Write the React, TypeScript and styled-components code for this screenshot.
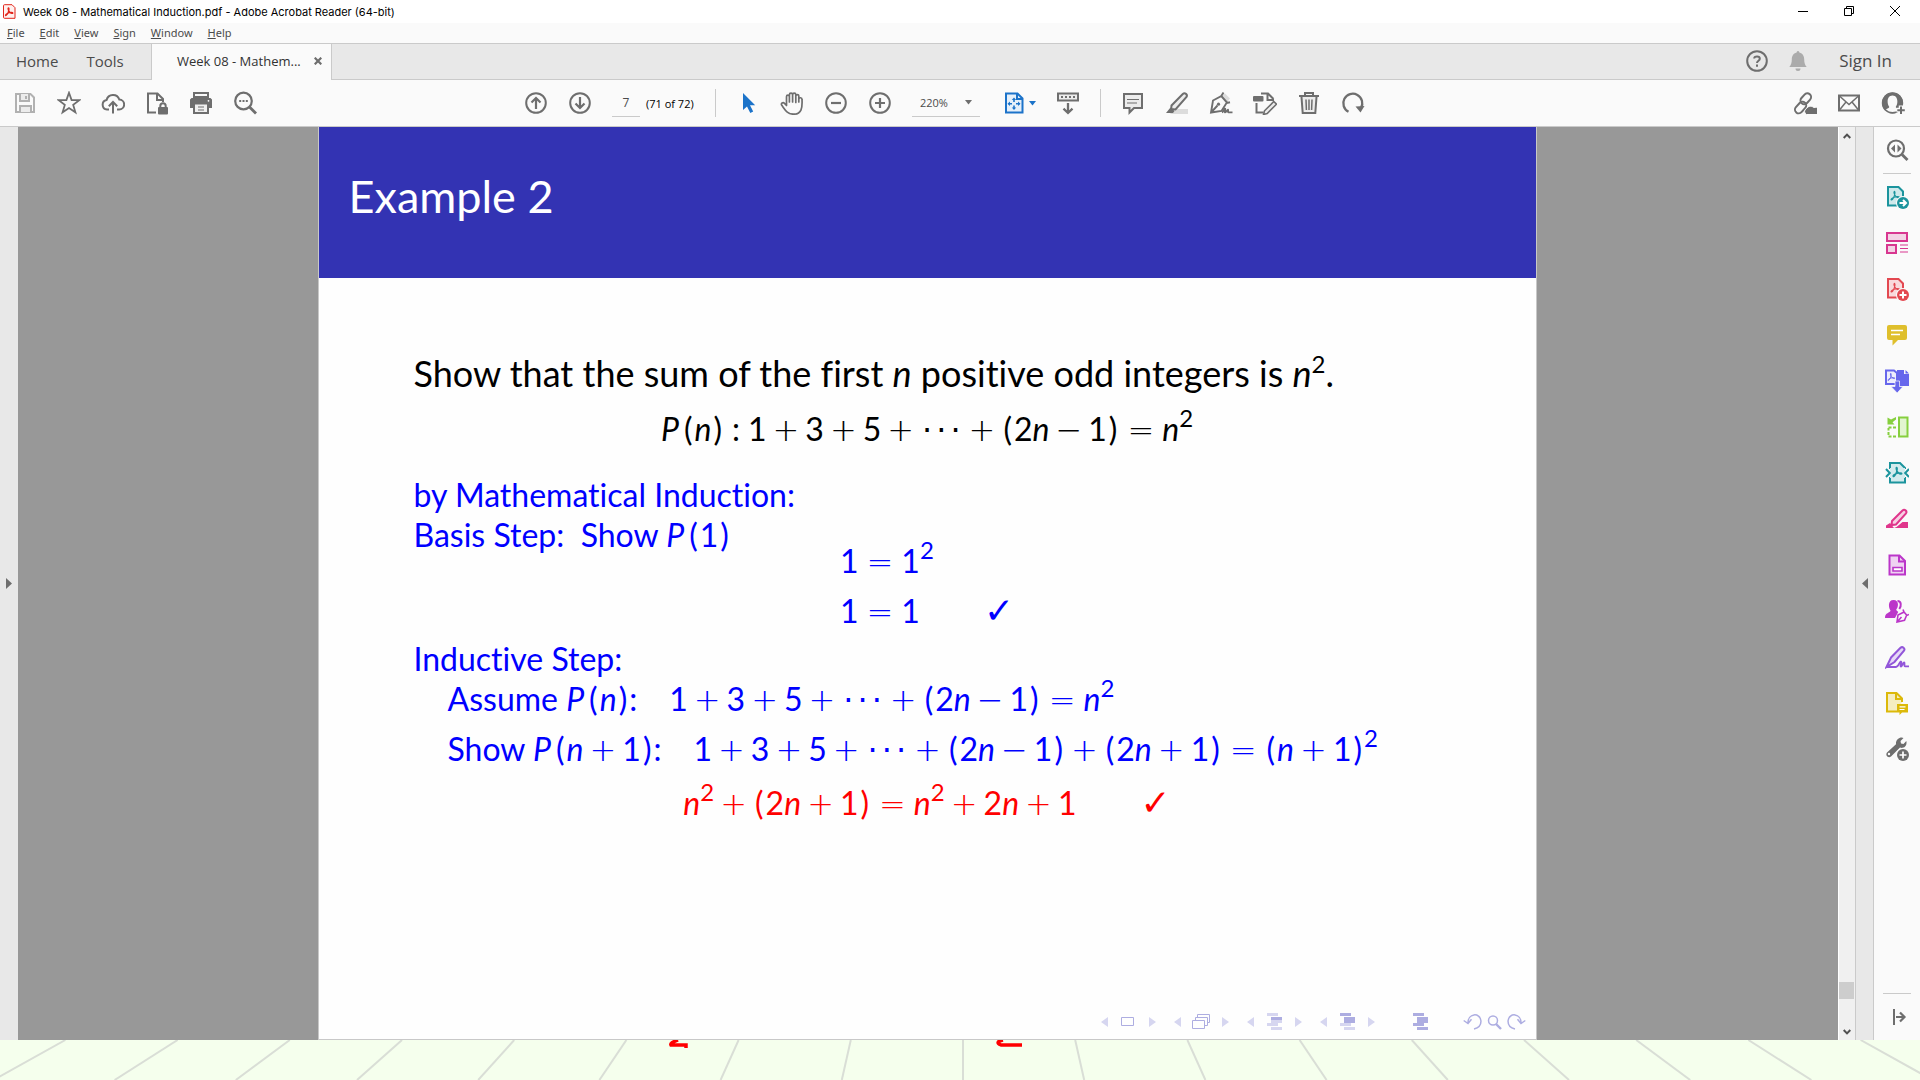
import React from "react";
import styled, { createGlobalStyle } from "styled-components";

const ui = '"Open Sans", "Noto Sans", sans-serif';
const grey = "#6e6e6e";

const GlobalStyle = createGlobalStyle`
  *, *::before, *::after { box-sizing: border-box; }
  body { margin: 0; font-family: ${ui}; }
  button, input, select { font: inherit; color: inherit; margin: 0; }
`;

const Window = styled.div`
  display: flex;
  flex-direction: column;
  height: 100vh;
  min-width: 1420px;
  overflow: hidden;
  background: #fafafa;
`;

/* ---------- window chrome ---------- */

const TitleBar = styled.header`
  display: flex;
  align-items: center;
  height: 23px;
  padding: 0 2px 0 3px;
  background: #fff;
  color: #000;
`;
const WindowTitle = styled.h1`
  flex: 1;
  margin: 0 0 0 7px;
  font-family: Inter, sans-serif;
  font-size: 11px;
  font-weight: 400;
  line-height: 22px;
`;
const WindowButton = styled.button`
  display: grid;
  place-items: center;
  width: 46px;
  height: 22px;
  padding: 0 0 2px;
  border: 0;
  background: none;
`;
const MenuBar = styled.nav`
  display: flex;
  gap: 15px;
  height: 21px;
  padding: 0 7px;
  border-bottom: 1px solid #cacaca;
  background: #fafafa;
`;
const MenuItem = styled.button`
  padding: 0;
  border: 0;
  background: none;
  color: #4b4b4b;
  font-family: "Noto Sans", sans-serif;
  font-size: 11px;
  line-height: 20px;
  &::first-letter { text-decoration: underline; }
`;

const TabBar = styled.nav`
  display: flex;
  height: 36px;
  background: #e8e8e8;
  box-shadow: inset 0 -1px #cacaca;
`;
const TabLinks = styled.div`
  display: flex;
  gap: 28px;
  width: 151px;
  padding-left: 16px;
`;
const TabLink = styled.button`
  padding: 0 0 2px;
  border: 0;
  background: none;
  color: #4b4b4b;
  font-size: 15px;
  white-space: nowrap;
`;
const DocTab = styled.div`
  display: flex;
  align-items: center;
  justify-content: space-between;
  width: 181px;
  padding: 0 9px 2px 25px;
  border: solid #cacaca;
  border-width: 0 1px;
  background: #fafafa;
  color: #323232;
  font-size: 13px;
  white-space: nowrap;
`;
const Account = styled.div`
  display: flex;
  align-items: center;
  gap: 17px;
  margin-left: auto;
  padding: 0 28px 2px 0;
  color: ${grey};
`;
const SignInLink = styled.a`
  margin-left: 12px;
  color: #4b4b4b;
  font-size: 17px;
  line-height: 24px;
  text-decoration: none;
`;
const PlainButton = styled.button`
  display: grid;
  padding: 0;
  border: 0;
  background: none;
`;

/* ---------- toolbar ---------- */

const Toolbar = styled.div`
  display: grid;
  grid-template-columns: 1fr auto 1fr;
  align-items: center;
  height: 47px;
  padding: 0 5px 0 3px;
  border-bottom: 1px solid #cacaca;
  background: #fafafa;
  color: ${grey};
`;
const Group = styled.div<{ $end?: boolean }>`
  display: flex;
  align-items: center;
  justify-content: ${(p) => (p.$end ? "flex-end" : "flex-start")};
`;
const CenterGroup = styled(Group)`
  padding-right: 29px;
`;
const ToolButton = styled.button<{ $wide?: boolean }>`
  display: flex;
  align-items: center;
  justify-content: center;
  gap: 3px;
  width: ${(p) => (p.$wide ? 54 : 44)}px;
  height: 44px;
  padding: 0;
  border: 0;
  background: none;
`;
const Separator = styled.span`
  width: 1px;
  height: 28px;
  margin: 0 10px;
  background: #cacaca;
`;
const PageInput = styled.input`
  width: 28px;
  height: 28px;
  margin-left: 10px;
  padding: 0;
  border: 0;
  border-bottom: 1px solid #cacaca;
  background: none;
  color: #4b4b4b;
  font-size: 12px;
  text-align: center;
`;
const PageCount = styled.span`
  width: 65px;
  padding-left: 6px;
  color: #000;
  font-size: 11px;
  white-space: nowrap;
`;
const ZoomField = styled.div`
  display: flex;
  align-items: center;
  width: 68px;
  height: 28px;
  margin: 0 12px 0 10px;
  padding-right: 7px;
  border-bottom: 1px solid #cacaca;
`;
const ZoomSelect = styled.select`
  flex: 1;
  width: 0;
  padding: 0 0 0 8px;
  border: 0;
  background: none;
  color: #4b4b4b;
  font-size: 11px;
  appearance: none;
`;

/* ---------- viewer ---------- */

const Viewer = styled.main`
  display: flex;
  flex: 1;
  min-height: 0;
`;
const SideHandle = styled.button<{ $right?: boolean }>`
  display: grid;
  place-items: center;
  width: ${(p) => (p.$right ? 19 : 18)}px;
  padding: 0;
  border: solid #cacaca;
  border-width: ${(p) => (p.$right ? "0 1px" : "0")};
  background: #e8e8e8;
`;
const Canvas = styled.div`
  display: flex;
  justify-content: center;
  flex: 1;
  padding-right: 2px;
  background: #989898;
`;
const Scrollbar = styled.div`
  display: flex;
  flex-direction: column;
  width: 17px;
  border-left: 1px solid #fff;
  background: #f0f0f0;
`;
const ScrollArrow = styled.button`
  display: grid;
  place-items: center;
  height: 17px;
  padding: 0;
  border: 0;
  background: none;
`;
const ScrollTrack = styled.div`
  display: flex;
  flex-direction: column;
  justify-content: flex-end;
  flex: 1;
  padding-bottom: 24px;
`;
const ScrollThumb = styled.div`
  height: 17px;
  margin-right: 1px;
  background: #cdcdcd;
`;
const ToolPane = styled.aside`
  display: flex;
  flex-direction: column;
  align-items: center;
  width: 46px;
  background: #fafafa;
  color: ${grey};
`;
const PaneButton = styled.button`
  display: grid;
  place-items: center;
  width: 46px;
  height: 46px;
  padding: 0;
  border: 0;
  background: none;
`;
const PaneRule = styled.span<{ $push?: boolean }>`
  width: 28px;
  height: 1px;
  margin-top: ${(p) => (p.$push ? "auto" : "0")};
  background: #cacaca;
`;

/* ---------- slide ---------- */

const Slide = styled.article`
  display: flex;
  flex-direction: column;
  width: min(100%, 1219px);
  border: solid #c8c8c8;
  border-width: 0 1px 1px;
  background: #fefefe;
  font-family: Lato, "Open Sans", sans-serif;
  font-size: 32px;
  font-variant-ligatures: none;
  line-height: 26px;
  white-space: nowrap;
`;
const SlideHeader = styled.header`
  height: 151px;
  padding: 42px 30px;
  background: #3333b3;
`;
const SlideTitle = styled.h2`
  margin: 0;
  color: #fff;
  font-size: 45px;
  font-weight: 400;
  line-height: 54px;
`;
const SlideBody = styled.div`
  display: flex;
  flex-direction: column;
  flex: 1;
  padding: 82px 95px 0;
  color: #0000ff;
`;
const Line = styled.p<{ $top?: number; $indent?: boolean }>`
  display: flex;
  align-items: baseline;
  margin: ${(p) => p.$top || 0}px 0 0;
  padding-left: ${(p) => (p.$indent ? 34 : 0)}px;
  white-space: pre;
`;
const Lead = styled(Line)`
  color: #000;
  font-size: 36px;
`;
const Centered = styled(Line)<{ $color?: string }>`
  justify-content: center;
  color: ${(p) => p.$color || "#0000ff"};
`;
const Derivation = styled.div`
  align-self: center;
`;
const Sup = styled.sup`
  font-size: 24px;
  line-height: 0;
  vertical-align: 14px;
`;
const Sign = styled.span<{ $gap?: number }>`
  margin: 0 ${(p) => p.$gap ?? 6}px;
  font-family: "DejaVu Sans", sans-serif;
  font-weight: 200;
  line-height: 0;
`;
const Dot = styled.span`
  margin: 0 2px;
  font-family: "DejaVu Sans", sans-serif;
  line-height: 0;
`;
const Delimiter = styled.span<{ $wide?: boolean }>`
  margin: 0 ${(p) => (p.$wide ? 8 : 2)}px;
`;
const Predicate = styled.i`
  margin-right: 3px;
`;
const Formula = styled.span<{ $gap?: boolean }>`
  margin-left: ${(p) => (p.$gap ? 32 : 0)}px;
`;
const Check = styled.span`
  margin-left: 64px;
  font-family: "DejaVu Sans", sans-serif;
  font-size: 36px;
  line-height: 0;
`;
const SlideNav = styled.nav`
  display: flex;
  align-items: center;
  justify-content: flex-end;
  gap: 18px;
  height: 34px;
  padding-right: 13px;
`;
const NavGroup = styled.div<{ $wide?: boolean }>`
  display: flex;
  align-items: center;
  justify-content: ${(p) => (p.$wide ? "center" : "space-between")};
  width: ${(p) => (p.$wide ? 56 : 55)}px;
`;
const NavButton = styled.button`
  display: grid;
  padding: 0;
  border: 0;
  background: none;
`;

/* ---------- desktop behind the window ---------- */

const Desktop = styled.footer`
  height: 40px;
  overflow: hidden;
  background: #f5ffed;
`;

/* ---------- icons ---------- */

type IconProps = { children: React.ReactNode; size?: number; color?: string };
const Icon = ({ children, size = 24, color = "currentColor" }: IconProps) => (
  <svg width={size} height={size} viewBox="0 0 24 24" fill="none" stroke={color} strokeWidth="2" aria-hidden="true">
    {children}
  </svg>
);

const Caret = ({ color = grey }: { color?: string }) => (
  <svg width="8" height="5" viewBox="0 0 8 5" aria-hidden="true"><path d="M0 0h7L3.500 4.500z" fill={color} /></svg>
);

const Trefoil = ({ x = 0, y = 0, s = 1, w = 1.3 }) => (
  <path
    transform={`translate(${x} ${y}) scale(${s})`}
    strokeWidth={w}
    strokeLinejoin="round"
    d="M4.200 0.500C3.200 1 4.300 4.500 6.200 6.200 8 7.800 9.800 7.700 9.800 6.900 9.800 6 6.500 5.900 4 6.900 1.500 7.900 0.200 9.300 0.700 9.900 1.600 10.600 3.600 7.600 4.400 5 5.100 2.600 5.200 0.400 4.200 0.500z"
  />
);

const SaveIcon = () => (
  <Icon color="#b1b1b1">
    <path d="M3 3h14.500L21 6.500V21H3z" /><path d="M7 3v7h9V3M13 5v3M7 21v-6h11v6" fill="#ececec" />
  </Icon>
);
const StarIcon = () => (
  <Icon><path d="M12 1.800l2.600 7.200 7.700.2-6.100 4.700 2.200 7.400L12 17l-6.400 4.300 2.200-7.400L1.700 9.200l7.700-.2z" strokeWidth="1.800" /></Icon>
);
const CloudIcon = () => (
  <Icon><path d="M8 18.500H6A4.800 4.800 0 0 1 5.600 9 6.600 6.600 0 0 1 18.300 8.500 5 5 0 0 1 18 18.500h-2" /><path d="M12 22.500V11.500M7.800 15.200L12 11l4.200 4.200" /></Icon>
);
const FileLockIcon = () => (
  <Icon>
    <path d="M11 21.500H3v-19h9.500L18 8v3M12 2.500V9h6" />
    <rect x="13" y="16" width="10" height="7.500" rx="1" fill={grey} stroke="none" />
    <path d="M15.300 16.500v-1.500a2.700 2.700 0 0 1 5.400 0v1.500" />
  </Icon>
);
const PrintIcon = () => (
  <Icon>
    <path d="M5 6V2h14v4z" />
    <path d="M2.500 7h19l1.500 1.500V17h-4v-4H5v4H1V8.500z" fill={grey} stroke="none" />
    <path d="M5 13v9h14v-9" fill="#f0f0f0" /><path d="M5 13h14" strokeWidth="1" /><path d="M9 16h6M9 19h6" strokeWidth="1" />
    <circle cx="19.500" cy="9.800" r=".9" fill="#fff" stroke="none" />
  </Icon>
);
const SearchIcon = () => (
  <Icon>
    <circle cx="10.500" cy="10" r="8.300" strokeWidth="2.200" /><path d="M16.500 16l6.500 6.500" strokeWidth="2.800" />
    <path d="M6.200 10h2M9.500 10h2M12.800 10h2" />
  </Icon>
);
const CircleIcon = ({ d }: { d: string }) => (
  <Icon><circle cx="12" cy="12" r="9.800" /><path d={d} strokeWidth="2.200" /></Icon>
);
const CursorIcon = () => (
  <Icon color="#1c73c9"><path d="M7 2v17l4-3.600L14.300 22l2.900-1.400L14 14.200h5.200z" fill="#1c73c9" stroke="none" /></Icon>
);
const HandIcon = () => (
  <Icon>
    <path strokeWidth="1.700" strokeLinejoin="round" strokeLinecap="round" d="M6.500 14.500V5.700c0-2 2.900-2 2.900 0V11 3.700c0-2 3.200-2 3.200 0V11 3.700c0-2 3.200-2 3.200 0V11.500 5c0-1.900 3-1.900 3 0V11 8c.3-1.700 3.200-1.700 3.200.4C22.500 17 21.500 23.200 13.500 23.200 7.500 23.200 5.500 19.500 1.800 14.300.6 12.400 3 10.800 4.500 12.400z" />
  </Icon>
);
const FitIcon = () => (
  <Icon color="#1c73c9">
    <path d="M4 2.500h11.500l5 5V21.500H4z" fill="#e6f0fa" /><path d="M15 2.500V8h5.500" />
    <path d="M12 8v3M12 14.500v3M6.500 12.700h3.500M14 12.700h3.500" strokeWidth="1.600" />
    <path d="M9.800 9L12 6.500l2.200 2.500zM9.800 16.500L12 19l2.200-2.500zM8 10.500l-2.500 2.200L8 15zM16 10.500l2.500 2.200L16 15z" fill="#1c73c9" stroke="none" />
  </Icon>
);
const ScrollModeIcon = () => (
  <Icon><path d="M2 2.500h20v7H2z" fill="#ececec" /><path d="M5 6h14" strokeDasharray="2 2" /><path d="M12 12v10M7.500 17.700L12 22l4.500-4.300" strokeWidth="2.300" /></Icon>
);
const CommentIcon = () => (
  <Icon><path d="M3 3h18v14h-8l-4.500 4.500V17H3z" fill="#ececec" /><path d="M6 8.500h12M6 12h10" strokeWidth="1.200" /></Icon>
);
const HighlightIcon = () => (
  <Icon>
    <path d="M9 18h14v5H5z" fill="#dcdcdc" stroke="none" />
    <path d="M6.500 14.500L17.800 3c2-1.800 5.200.5 3.700 3L10.500 18.500l-4.300-.4z" fill="#ececec" />
    <path d="M5.500 16.500l4 3.500-1.500 2H1z" fill={grey} stroke="none" />
  </Icon>
);
const SignIcon = () => (
  <Icon>
    <path d="M13.500 4.500l5 6 2.500-3-5-5z" fill="#dcdcdc" stroke="none" />
    <path d="M14.500 1.500L12.300 5 4 9.500 2 21.500l10.500-1.600 5-7.900 3.500-.8M12.300 5l5.700 6.500M2.500 21l6-6.500" strokeWidth="1.900" />
    <circle cx="9.500" cy="13.200" r="1.600" fill={grey} stroke="none" />
    <path d="M13 21.500c1-.3 2.500-4.500 3.200-3.800.7.700-1.200 3.600 0 3.600s2-2.900 2.800-2.700c.7.200-.6 2.700.5 2.700h4" strokeWidth="1.800" />
  </Icon>
);
const EditPdfIcon = () => (
  <Icon>
    <path d="M8 2.500h7l5.500 5.500M14.500 2.500V9H21M3.500 12v9.500h7" />
    <rect x="0" y="5" width="10.500" height="5.500" rx="1" fill={grey} stroke="none" />
    <path d="M20.800 10.500l2.700 2.700-9.300 9.300-3.700 1 1-3.700z" fill="#ececec" strokeWidth="1.600" />
  </Icon>
);
const TrashIcon = () => (
  <Icon><path d="M4.500 6L5.700 22h12.600L19.500 6" fill="#ececec" /><path d="M2 5h20M8 5V2h8v3" /><path d="M9 8.500l.4 10.500M12 8.500V19M15 8.500L14.600 19" strokeWidth="1.500" /></Icon>
);
const RotateIcon = () => (
  <Icon><path d="M7.500 20.700A9.500 9.500 0 1 1 20 17" strokeWidth="2.300" /><path d="M14.500 15.500l9-.5-4 6.500z" fill={grey} stroke="none" /></Icon>
);
const LinkCloudIcon = () => (
  <Icon>
    <g transform="rotate(-48 10 12)"><rect x="9" y="7.500" width="12" height="7.500" rx="3.700" /><rect x="-1.500" y="9.500" width="13" height="7.500" rx="3.700" /></g>
    <path d="M13.500 23.500a3.300 3.300 0 0 1 0-6 4.600 4.600 0 0 1 7.300-1 3.700 3.700 0 0 1 3.200 7z" fill={grey} stroke="#fafafa" strokeWidth="1" />
  </Icon>
);
const MailIcon = () => (
  <Icon><path d="M2 4.500h20v15H2z" /><path d="M2.500 5l9.500 8.500L21.500 5M2.500 19L9 11M21.500 19L15 11" strokeWidth="1.500" /></Icon>
);
const UserIcon = () => (
  <Icon>
    <circle cx="11.500" cy="12" r="10.500" fill={grey} stroke="none" />
    <path d="M4 19.200c1.500-1.800 3.800-1.700 4.300-3.200C5.500 12 6 4.500 11.500 4.500s6 7.500 3.200 11.500c.5 1.500 2.800 1.400 4.300 3.200A10.400 10.400 0 0 1 4 19.200z" fill="#fafafa" stroke="none" />
    <circle cx="11.500" cy="12" r="9.900" strokeWidth="1.600" />
    <path d="M20 14.500v9M15.500 19h9" stroke="#fafafa" strokeWidth="4.500" /><path d="M20 15.500v7.500M16.300 19.200h7.500" />
  </Icon>
);
const HelpIcon = () => (
  <Icon><circle cx="12" cy="12" r="9.800" /><path d="M9.200 9.500C9.200 6.700 14.800 6.700 14.800 9.700c0 2-2.800 2-2.800 4.300M12 15.500v2.200" /></Icon>
);
const BellIcon = () => (
  <Icon><path d="M12 2c1 0 1.300.8 1.300 1.600 3.700.8 4.900 4 4.900 7 0 3.400.8 5.400 2.500 7.400H3.300c1.700-2 2.500-4 2.500-7.400 0-3 1.200-6.200 4.900-7C10.700 2.800 11 2 12 2zM9.500 19.500h5a2.500 2.500 0 0 1-5 0z" fill="#ababab" stroke="none" /></Icon>
);

/* tools pane */
const FindPaneIcon = () => (
  <Icon><circle cx="11" cy="10.500" r="8" strokeWidth="2.200" /><path d="M17 16.500l5.500 5.500" strokeWidth="2.800" /><path d="M10 6.500v8L6 10.500zM12.500 6.500v8l4-4z" fill={grey} stroke="none" /></Icon>
);
const PdfBadgeIcon = ({ color, tint, d }: { color: string; tint: string; d: string }) => (
  <Icon color={color}>
    <path d="M3 2h10.500L18 6.500V20.500H3z" fill={tint} /><Trefoil x={5.500} y={6} s={0.9} />
    <circle cx="18" cy="18" r="7" fill="#fafafa" stroke="none" /><circle cx="18" cy="18" r="6" fill={color} stroke="none" />
    <path d={d} stroke="#fff" />
  </Icon>
);
const OrganizeIcon = () => (
  <Icon color="#d83790"><path d="M2 2h20v8H2zM2 14h9v8H2z" fill="#f3d3e5" /><path d="M15 14h8M15 17.500h8M15 21h8" strokeWidth="1.200" /></Icon>
);
const CommentPaneIcon = () => (
  <Icon><path d="M4 2h16a2 2 0 0 1 2 2v11a2 2 0 0 1-2 2h-7l-5.500 5.500V17H4a2 2 0 0 1-2-2V4a2 2 0 0 1 2-2z" fill="#dfbf2c" stroke="none" /><path d="M6 7.500h12M6 11.500h9" stroke="#fff" strokeWidth="1.600" /></Icon>
);
const CombineIcon = () => (
  <Icon color="#6767ec">
    <path d="M1 1.500h8L12 4v11H1z" fill="#eeeefc" /><path d="M12 1h7v4h5v12H12z" fill="#6767ec" stroke="none" />
    <path d="M20.500 1v3.500H24z" fill="#6767ec" stroke="none" /><Trefoil x={2.500} y={4} s={0.75} />
    <path d="M10 12h4.500v5.500H18L12.200 24 6 17.500h4z" fill="#6767ec" stroke="#fafafa" strokeWidth=".7" />
  </Icon>
);
const RotatePageIcon = () => (
  <Icon color="#86cf3e"><path d="M14 2.500h8.500v19H14z" fill="#e2f5d0" /><path d="M11 21.500H3.500V13M11 12.500H3" strokeDasharray="3 1.500" /><path d="M2.500 2.500v7h7L7.500 7.200 11 4.500V2L6 4.500z" fill="#86cf3e" stroke="none" /></Icon>
);
const CompressIcon = () => (
  <Icon color="#1b949d">
    <path d="M5 8V2h10l5 5v1M5 16v5.500h15V16" fill="#d3ebed" /><path d="M5 7h15v10H5z" fill="#d3ebed" stroke="none" />
    <path d="M1 8l3.800 4L1 16M24 8l-3.800 4 3.800 4" /><Trefoil x={7.500} y={6} s={0.95} w={1.500} />
  </Icon>
);
const RedactIcon = () => (
  <Icon color="#e0368c"><path d="M7 14L17.500 3.500c2-1.800 5 .6 3.500 2.800L11 17.500 6.500 18z" fill="#f7d0e3" /><path d="M11.500 20l6-5H23v6H9zM1 21v-2.500L5 16l4 5z" fill="#e0368c" stroke="none" /></Icon>
);
const FormIcon = () => (
  <Icon color="#bb36c9"><path d="M4.500 2.500h10L20 8v13.500H4.500z" fill="#efd2f2" /><path d="M14 2.500V8.500h6" /><path d="M8 14.500h9v3.500H8z" fill="#fff" strokeWidth="1.600" /></Icon>
);
const CertifyIcon = () => (
  <Icon color="#bb36c9">
    <path d="M8.500 1c6 0 5 7.500 2.700 9.500.3 2 2 1.500 2 2.500L10 19H0c0-6 5-4.500 5.500-7.500C3.500 9 2.500 1 8.500 1z" fill="#bb36c9" stroke="none" />
    <path d="M12.500 2c4 0 4 5 1.800 8" /><path d="M18 10.500l1 2.500-6 3-1 7 7.500-1.800 2-4.700 2.500-1M19 13l3 3.500M12.500 22.500l4-4.500" strokeWidth="1.600" />
  </Icon>
);
const FillSignIcon = () => (
  <Icon color="#9256d9"><path d="M6 12.500L15.500 2.800c2-1.800 5 .6 3.500 2.900L9.500 17 1.500 22z" fill="#e6d9f7" /><path d="M1 22h10c3 0 3.500-6 5-5.500s-1.500 5 0 5 2-4.500 3.200-4.200-.7 4 .8 4H24" strokeWidth="1.800" /></Icon>
);
const SendCommentsIcon = () => (
  <Icon color="#dcb90a"><path d="M12 20.500H2V2h9.500L17 7.500V11" fill="#f5edc2" /><path d="M11 2v6h6" /><path d="M12 13h11v8.500h-6L14.500 24v-2.500H12z" fill="#dcb90a" stroke="none" /><path d="M14.500 15.800h6M14.500 18.500h5" stroke="#fff" strokeWidth="1.200" /></Icon>
);
const MoreToolsIcon = () => (
  <Icon>
    <path d="M14.500 1c2-.8 3.200-.3 4 0L15.500 4l.5 2.500 2.500.5 2.800-3c.7 2.300 0 5-2 6.200-1.500 1-3 .8-4.300.4L6 19.500c-2.800 2-6-1-4-4L11 7.300C10.500 4.500 12 2 14.500 1z" fill={grey} stroke="none" />
    <circle cx="4" cy="17" r="1.200" fill="#fafafa" stroke="none" />
    <circle cx="18" cy="18" r="7.200" fill="#fafafa" stroke="none" /><circle cx="18" cy="18" r="6" fill={grey} stroke="none" /><path d="M18 14.500v7M14.500 18h7" stroke="#fff" strokeWidth="1.700" />
  </Icon>
);

const paneTools: [string, React.ReactNode][] = [
  ["Export PDF", <PdfBadgeIcon color="#1b949d" tint="#cfe9eb" d="M14.500 18h6M18 15l3 3-3 3" />],
  ["Edit PDF", <OrganizeIcon />],
  ["Create PDF", <PdfBadgeIcon color="#e34850" tint="#f9dadc" d="M18 14.500v7M14.500 18h7" />],
  ["Comment", <CommentPaneIcon />],
  ["Combine Files", <CombineIcon />],
  ["Organize Pages", <RotatePageIcon />],
  ["Compress PDF", <CompressIcon />],
  ["Redact", <RedactIcon />],
  ["Prepare Form", <FormIcon />],
  ["Request E-signatures", <CertifyIcon />],
  ["Fill & Sign", <FillSignIcon />],
  ["Send for Comments", <SendCommentsIcon />],
  ["More Tools", <MoreToolsIcon />],
];

/* slide navigation symbols */
const pale = "#d6d6f0";
const deep = "#adade1";

const Arrow = ({ back, label }: { back?: boolean; label: string }) => (
  <NavButton aria-label={label}>
    <svg width="7" height="10" viewBox="0 0 7 10" aria-hidden="true"><path d={back ? "M7 0v10L0 5z" : "M0 0v10l7-5z"} fill={pale} /></svg>
  </NavButton>
);
const Outline = ({ a, b, c, d }: { a: string; b: string; c: string; d: string }) => (
  <svg width="15" height="18" viewBox="0 0 15 18" aria-hidden="true">
    <path d="M0 0h11v3H0z" fill={a} /><path d="M4 4h11v3H4z" fill={b} /><path d="M4 7h11v3H4z" fill={c} />
    <path d="M0 10h11v3H0zM4 14h11v3H4z" fill={d} />
  </svg>
);
const navGroups: [string, React.ReactNode][] = [
  ["slide", <svg width="14" height="10" viewBox="0 0 14 10" fill="none" stroke={deep} aria-hidden="true"><path d="M.5.5h12v8H.5z" /></svg>],
  ["frame", (
    <svg width="18" height="16" viewBox="0 0 18 16" fill="#fefefe" stroke={deep} aria-hidden="true">
      <path d="M5.500.5h12v8h-12z" /><path d="M3.500 3.500h12v8h-12z" /><path d="M.5 6.500h12v8H.5z" />
    </svg>
  )],
  ["subsection", <Outline a={pale} b={deep} c={pale} d={pale} />],
  ["section", <Outline a={deep} b={deep} c={deep} d={pale} />],
];

/* ---------- formulas ---------- */

const Plus = () => <Sign>+</Sign>;
const Minus = () => <Sign>−</Sign>;
const Equals = () => <Sign $gap={8}>=</Sign>;
const Paren = ({ children }: { children: React.ReactNode }) => (
  <><Delimiter>(</Delimiter>{children}<Delimiter>)</Delimiter></>
);
const N = () => <i>n</i>;
const P = ({ children }: { children: React.ReactNode }) => <><Predicate>P</Predicate><Paren>{children}</Paren></>;
const Squared = () => <Sup>2</Sup>;
const OddSum = () => (
  <>1<Plus />3<Plus />5<Plus /><Dot>·</Dot><Dot>·</Dot><Dot>·</Dot><Plus /><Paren>2<N /><Minus />1</Paren></>
);

const gridLines = Array.from({ length: 17 }, (_, i) => i - 8);

export default function App() {
  return (
    <Window>
      <GlobalStyle />
      <TitleBar>
        <svg width="13" height="15" viewBox="0 0 13 15" fill="#fff0ee" stroke="#e1251b" aria-hidden="true">
          <path d="M1.500.7h7.500l3 3v10.600h-10.500a1 1 0 0 1-1-1V1.700a1 1 0 0 1 1-1z" /><Trefoil x={2} y={3.500} s={0.8} w={1.600} />
        </svg>
        <WindowTitle>Week 08 - Mathematical Induction.pdf - Adobe Acrobat Reader (64-bit)</WindowTitle>
        <WindowButton aria-label="Minimize"><svg width="10" height="10" stroke="#000"><path d="M0 5.500h10" /></svg></WindowButton>
        <WindowButton aria-label="Restore"><svg width="10" height="10" stroke="#000" fill="none"><path d="M.5 2.500h7v7h-7zM2.500 2.500v-2h7v7h-2" /></svg></WindowButton>
        <WindowButton aria-label="Close"><svg width="10" height="10" stroke="#000"><path d="M0 0l10 10M10 0L0 10" /></svg></WindowButton>
      </TitleBar>
      <MenuBar>
        {["File", "Edit", "View", "Sign", "Window", "Help"].map((m) => <MenuItem key={m}>{m}</MenuItem>)}
      </MenuBar>
      <TabBar>
        <TabLinks><TabLink>Home</TabLink><TabLink>Tools</TabLink></TabLinks>
        <DocTab>
          Week 08 - Mathem...
          <PlainButton aria-label="Close tab"><svg width="8" height="8" stroke={grey} strokeWidth="2.200"><path d="M.7.7l6.600 6.600M7.300.7L.7 7.300" /></svg></PlainButton>
        </DocTab>
        <Account>
          <PlainButton aria-label="Help"><HelpIcon /></PlainButton>
          <PlainButton aria-label="Notifications"><BellIcon /></PlainButton>
          <SignInLink href="#sign-in">Sign In</SignInLink>
        </Account>
      </TabBar>
      <Toolbar>
        <Group>
          <ToolButton aria-label="Save" disabled><SaveIcon /></ToolButton>
          <ToolButton aria-label="Star file"><StarIcon /></ToolButton>
          <ToolButton aria-label="Upload to cloud"><CloudIcon /></ToolButton>
          <ToolButton aria-label="Protect"><FileLockIcon /></ToolButton>
          <ToolButton aria-label="Print"><PrintIcon /></ToolButton>
          <ToolButton aria-label="Find"><SearchIcon /></ToolButton>
        </Group>
        <CenterGroup>
          <ToolButton aria-label="Previous page"><CircleIcon d="M12 18V7M7.500 11.500L12 7l4.500 4.500" /></ToolButton>
          <ToolButton aria-label="Next page"><CircleIcon d="M12 6v11M7.500 12.500L12 17l4.500-4.500" /></ToolButton>
          <PageInput aria-label="Page number" defaultValue="7" />
          <PageCount>(71 of 72)</PageCount>
          <Separator />
          <ToolButton aria-label="Select"><CursorIcon /></ToolButton>
          <ToolButton aria-label="Pan"><HandIcon /></ToolButton>
          <ToolButton aria-label="Zoom out"><CircleIcon d="M7 12h10" /></ToolButton>
          <ToolButton aria-label="Zoom in"><CircleIcon d="M7 12h10M12 7v10" /></ToolButton>
          <ZoomField>
            <ZoomSelect aria-label="Zoom level"><option>220%</option></ZoomSelect>
            <Caret />
          </ZoomField>
          <ToolButton $wide aria-label="Fit page"><FitIcon /><Caret color="#1c73c9" /></ToolButton>
          <ToolButton aria-label="Scrolling mode"><ScrollModeIcon /></ToolButton>
          <Separator />
          <ToolButton aria-label="Add comment"><CommentIcon /></ToolButton>
          <ToolButton aria-label="Highlight"><HighlightIcon /></ToolButton>
          <ToolButton aria-label="Sign"><SignIcon /></ToolButton>
          <ToolButton aria-label="Edit"><EditPdfIcon /></ToolButton>
          <ToolButton aria-label="Delete"><TrashIcon /></ToolButton>
          <ToolButton aria-label="Rotate"><RotateIcon /></ToolButton>
        </CenterGroup>
        <Group $end>
          <ToolButton aria-label="Share link"><LinkCloudIcon /></ToolButton>
          <ToolButton aria-label="Email"><MailIcon /></ToolButton>
          <ToolButton aria-label="Invite people"><UserIcon /></ToolButton>
        </Group>
      </Toolbar>
      <Viewer>
        <SideHandle aria-label="Open navigation pane">
          <svg width="6" height="11"><path d="M0 0v11l6-5.500z" fill={grey} /></svg>
        </SideHandle>
        <Canvas>
          <Slide>
            <SlideHeader><SlideTitle>Example 2</SlideTitle></SlideHeader>
            <SlideBody>
              <Lead><span>Show that the sum of the first <N /> positive odd integers is <N /><Squared />.</span></Lead>
              <Centered $top={30} $color="#000"><span><P><N /></P><Delimiter $wide>:</Delimiter><OddSum /><Equals /><N /><Squared /></span></Centered>
              <Line $top={40}>by Mathematical Induction:</Line>
              <Line $top={14}><span>Basis Step:  Show <P>1</P></span></Line>
              <Derivation>
                <Line><Formula>1<Equals />1<Squared /></Formula></Line>
                <Line $top={24}><Formula>1<Equals />1</Formula><Check>✓</Check></Line>
              </Derivation>
              <Line $top={22}>Inductive Step:</Line>
              <Line $top={14} $indent>
                <span>Assume <P><N /></P>:</span><Formula $gap><OddSum /><Equals /><N /><Squared /></Formula>
              </Line>
              <Line $top={24} $indent>
                <span>Show <P><N /><Plus />1</P>:</span>
                <Formula $gap><OddSum /><Plus /><Paren>2<N /><Plus />1</Paren><Equals /><Paren><N /><Plus />1</Paren><Squared /></Formula>
              </Line>
              <Centered $top={28} $color="#ff0000">
                <Formula><N /><Squared /><Plus /><Paren>2<N /><Plus />1</Paren><Equals /><N /><Squared /><Plus />2<N /><Plus />1</Formula>
                <Check>✓</Check>
              </Centered>
            </SlideBody>
            <SlideNav aria-label="Slide navigation">
              {navGroups.map(([name, icon]) => (
                <NavGroup key={name}>
                  <Arrow back label={`Previous ${name}`} />
                  <NavButton aria-label={`Go to ${name}`}>{icon}</NavButton>
                  <Arrow label={`Next ${name}`} />
                </NavGroup>
              ))}
              <NavGroup $wide>
                <NavButton aria-label="Presentation"><Outline a={deep} b={deep} c={deep} d={deep} /></NavButton>
              </NavGroup>
              <NavGroup $wide>
                <NavButton aria-label="Back, find, forward">
                  <svg width="63" height="16" viewBox="0 0 63 16" fill="none" stroke={deep} strokeWidth="1.500" aria-hidden="true">
                    <path d="M.7 6.500L5 9.500l3.500-4.200M5 9.500C4.500-1 17-2 18 7c0 4-2.500 7-7 8" />
                    <circle cx="30" cy="6.500" r="4.500" /><path d="M33 10l5 5" strokeWidth="2.400" />
                    <path d="M62.300 6.500L58 9.500l-3.500-4.200M58 9.500C58.500-1 46-2 45 7c0 4 2.500 7 7 8" />
                  </svg>
                </NavButton>
              </NavGroup>
            </SlideNav>
          </Slide>
        </Canvas>
        <Scrollbar>
          <ScrollArrow aria-label="Scroll up"><svg width="8" height="6" fill="none" stroke="#505050" strokeWidth="2"><path d="M.7 5L4 1.600 7.300 5" /></svg></ScrollArrow>
          <ScrollTrack><ScrollThumb /></ScrollTrack>
          <ScrollArrow aria-label="Scroll down"><svg width="8" height="6" fill="none" stroke="#505050" strokeWidth="2"><path d="M.7 1L4 4.400 7.300 1" /></svg></ScrollArrow>
        </Scrollbar>
        <SideHandle $right aria-label="Collapse tools pane">
          <svg width="6" height="11"><path d="M6 0v11L0 5.500z" fill={grey} /></svg>
        </SideHandle>
        <ToolPane>
          <PaneButton aria-label="Find tools"><FindPaneIcon /></PaneButton>
          <PaneRule />
          {paneTools.map(([name, icon]) => <PaneButton key={name} aria-label={name}>{icon}</PaneButton>)}
          <PaneRule $push />
          <PaneButton aria-label="Expand pane">
            <Icon><path d="M9 4v16" strokeWidth="2" /><path d="M11 12h8M15 7.500L19.500 12 15 16.500" strokeWidth="2.200" /></Icon>
          </PaneButton>
        </ToolPane>
      </Viewer>
      <Desktop>
        <svg width="100%" height="40" viewBox="0 0 1920 40" preserveAspectRatio="none" fill="none" aria-hidden="true">
          {gridLines.map((k) => <path key={k} d={`M${963 + 112.2 * k} 0L${963 + 121.2 * k} 40`} stroke="#d9ded6" strokeWidth="2" />)}
          <path d="M678 0C673 2 670 3 671 5h15v3" stroke="#ff0000" strokeWidth="3.500" />
          <path d="M1003 0C998 1 996 3 1001 5h21" stroke="#ff0000" strokeWidth="3.500" />
        </svg>
      </Desktop>
    </Window>
  );
}
